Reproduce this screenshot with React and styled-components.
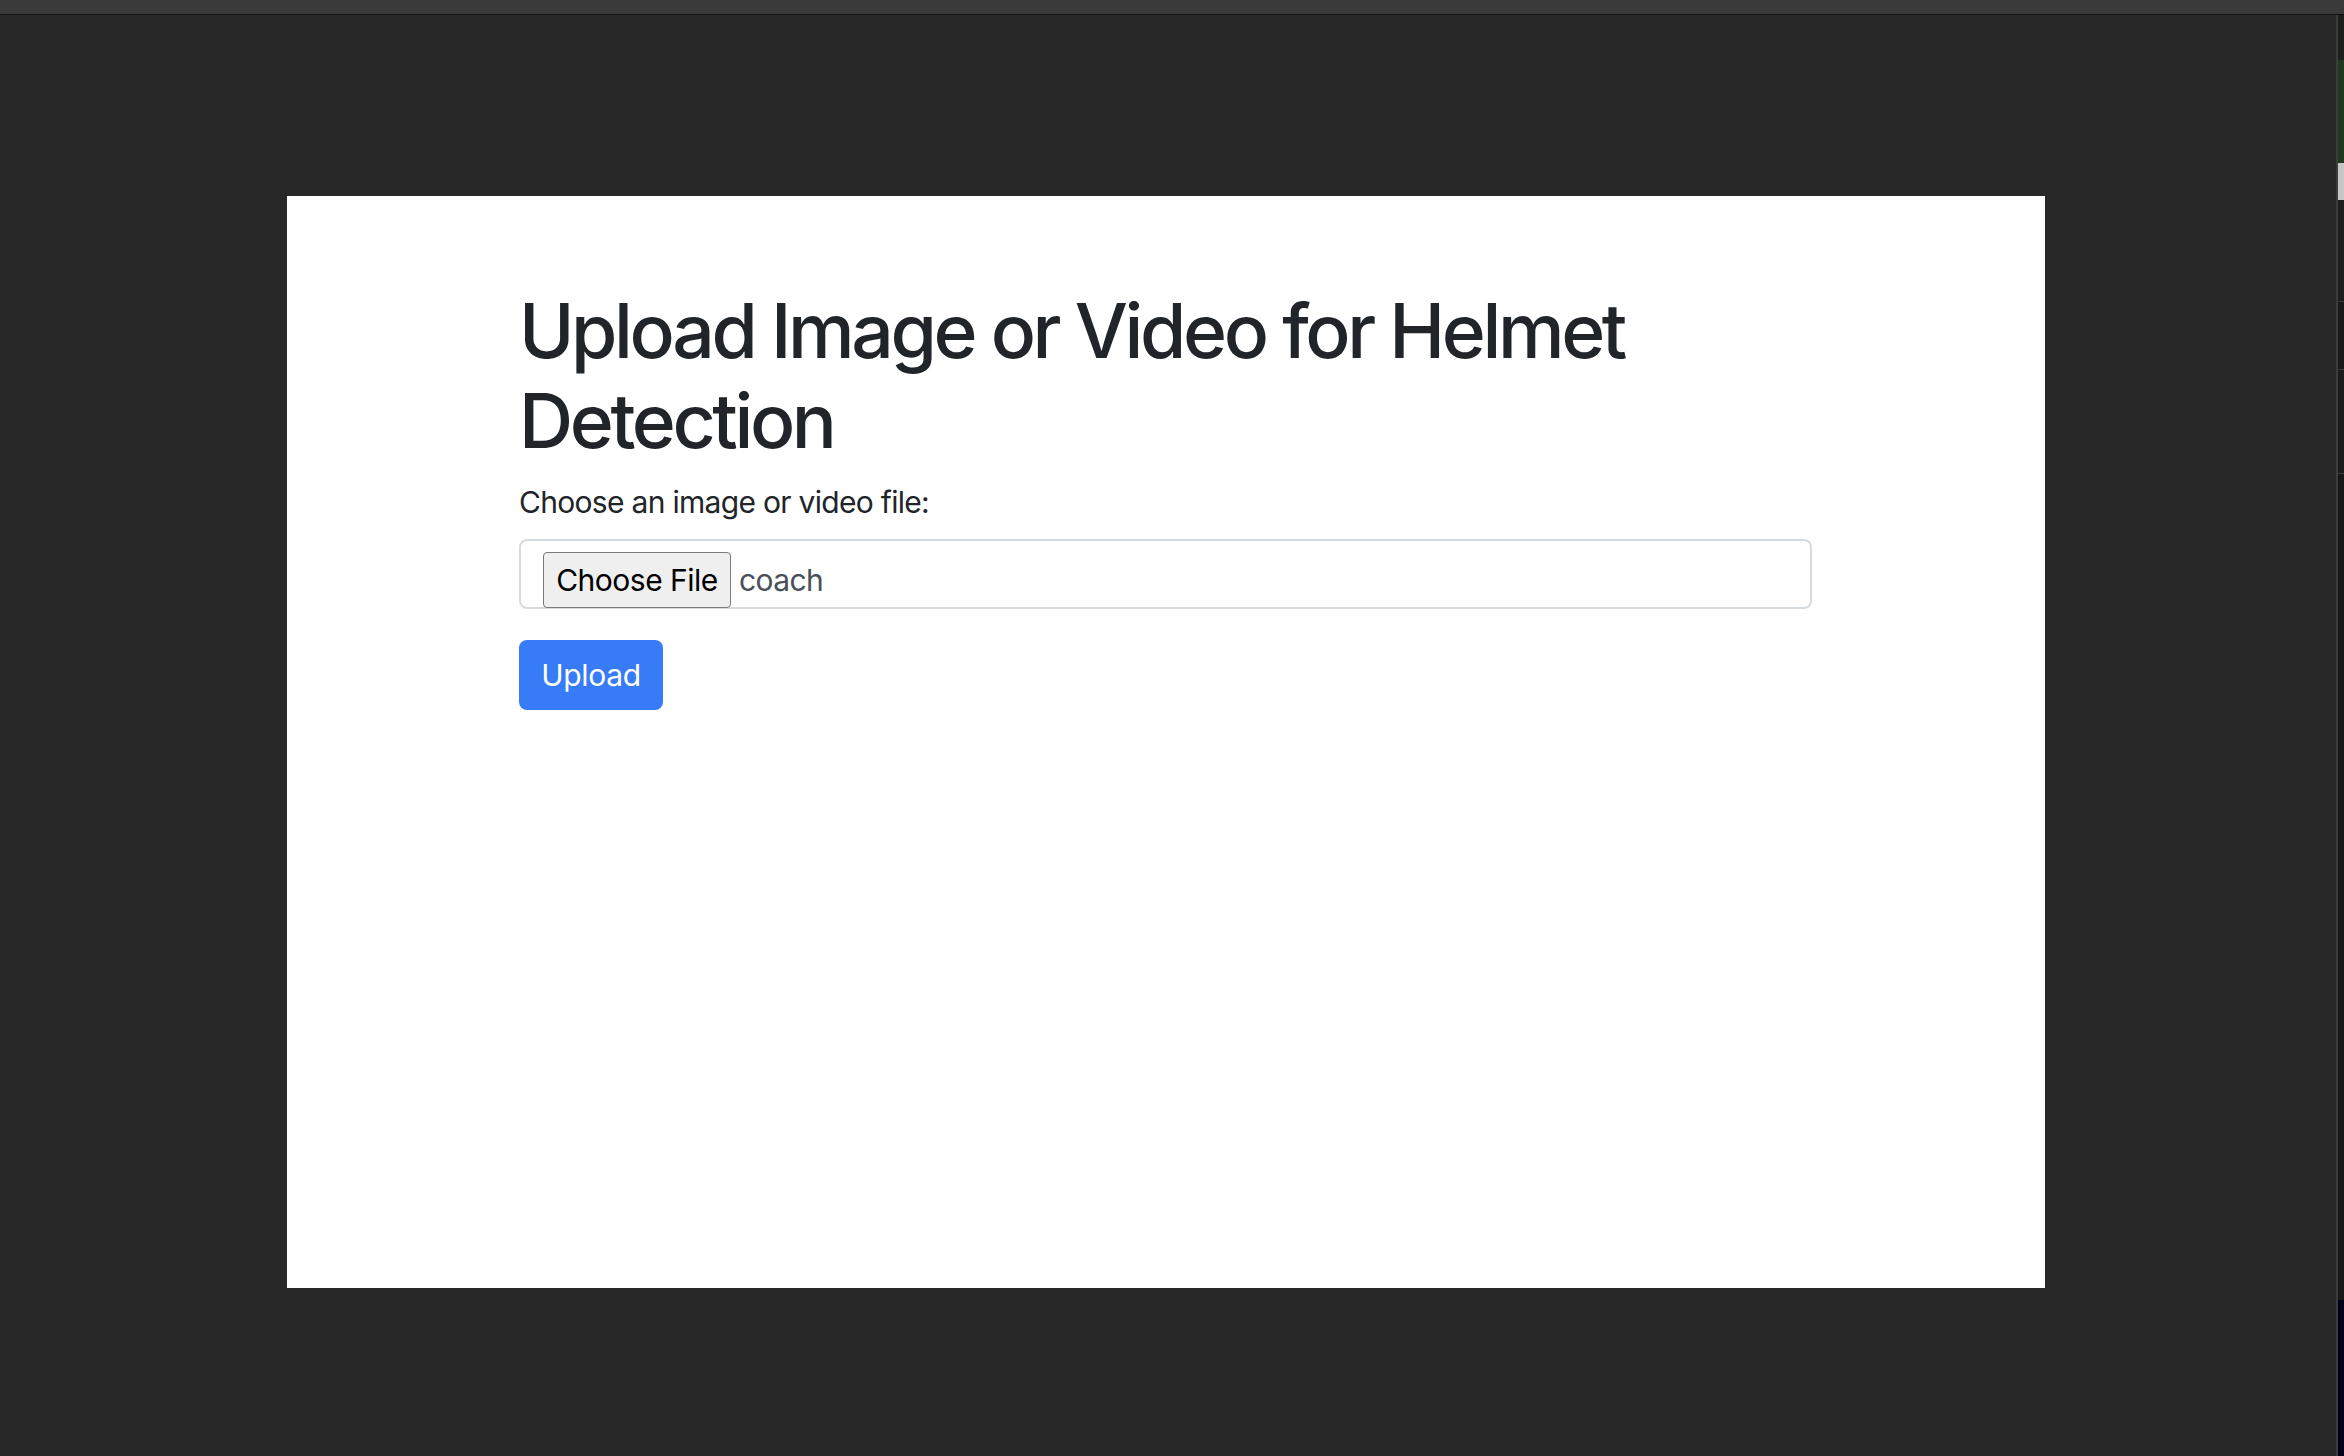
import React from "react";
import styled, { createGlobalStyle } from "styled-components";

const Global = createGlobalStyle`
  html, body { margin: 0; padding: 0; background: #282828; }
  body {
    width: 2344px;
    height: 1456px;
    overflow: hidden;
    font-family: Inter, "Noto Sans", "Liberation Sans", sans-serif;
  }
  * { box-sizing: border-box; }
`;

const Screen = styled.div`
  width: 2344px;
  height: 1456px;
  display: flex;
  flex-direction: column;
  background: #282828;
`;

const TitleBar = styled.div`
  height: 15px;
  flex-shrink: 0;
  background: #3a3a3a;
  border-bottom: 1px solid #121212;
`;

const Body = styled.div`
  flex: 1;
  display: flex;
  min-height: 0;
`;

const Workspace = styled.div`
  flex: 1;
  padding: 181px 0 0 287px;
`;

const Page = styled.main`
  width: 1758px;
  height: 1092px;
  background: #ffffff;
  padding: 90px 232px 0;
`;

const Heading = styled.h1`
  margin: 0 0 14px;
  font-size: 75px;
  line-height: 90px;
  font-weight: 500;
  color: #212529;
  letter-spacing: -3.4px;
`;

const Label = styled.label`
  display: block;
  font-size: 30px;
  line-height: 45px;
  color: #212529;
  margin-bottom: 14px;
  letter-spacing: -0.7px;
`;

const FileField = styled.div`
  width: 1293px;
  height: 70px;
  border: 2px solid #d6dbe0;
  border-radius: 8px;
  padding: 11px 0 0 22px;
  display: flex;
  align-items: flex-start;
  gap: 8px;
`;

const ChooseButton = styled.button`
  width: 188px;
  height: 56px;
  background: #efefef;
  border: 1.5px solid #7a7a7a;
  border-radius: 4px;
  font-family: inherit;
  font-size: 30px;
  letter-spacing: -0.5px;
  color: #000;
  padding: 0;
`;

const FileName = styled.span`
  font-size: 30px;
  line-height: 56px;
  letter-spacing: -0.6px;
  color: #495057;
`;

const UploadButton = styled.button`
  margin-top: 31px;
  width: 144px;
  height: 70px;
  border: none;
  border-radius: 8px;
  background: #377bf6;
  color: #ffffff;
  font-family: inherit;
  font-size: 30px;
  letter-spacing: -0.3px;
  padding: 0;
`;

const SideStrip = styled.aside`
  width: 8px;
  flex-shrink: 0;
  display: flex;
  flex-direction: column;
  border-left: 2px solid #3c3c3c;
  background: #1a1a1a;
`;

const StripBlock = styled.div`
  height: ${(p) => p.$h}px;
  flex: ${(p) => (p.$grow ? 1 : "none")};
  background: ${(p) => p.$bg};
  border-bottom: ${(p) => (p.$line ? "1px solid #3a3a3a" : "none")};
`;

export default function App() {
  return (
    <>
      <Global />
      <Screen>
        <TitleBar />
        <Body>
          <Workspace>
            <Page>
              <Heading>Upload Image or Video for Helmet Detection</Heading>
              <Label htmlFor="file">Choose an image or video file:</Label>
              <FileField id="file">
                <ChooseButton type="button">Choose File</ChooseButton>
                <FileName>coach</FileName>
              </FileField>
              <UploadButton type="button">Upload</UploadButton>
            </Page>
          </Workspace>
          <SideStrip>
            <StripBlock $h={45} $bg="#1c201c" />
            <StripBlock $h={103} $bg="#203a20" />
            <StripBlock $h={37} $bg="#c6c6c6" />
            <StripBlock $h={102} $bg="#1e1e1e" $line />
            <StripBlock $h={68} $bg="#1a1a1a" $line />
            <StripBlock $h={104} $bg="#1c1c1c" $line />
            <StripBlock $grow $bg="#181818" />
            <StripBlock $h={156} $bg="#00001a" />
          </SideStrip>
        </Body>
      </Screen>
    </>
  );
}
